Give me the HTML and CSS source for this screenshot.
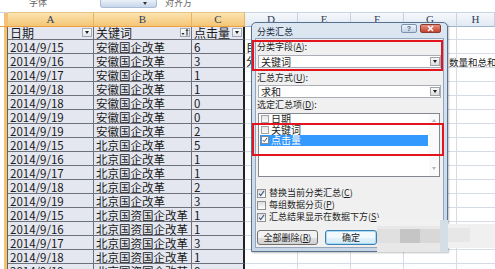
FILE: index.html
```html
<!DOCTYPE html>
<html lang="zh">
<head>
<meta charset="utf-8">
<title>分类汇总</title>
<link rel="stylesheet" href="styles.css">
</head>
<body>
<div class="page">
  <div class="ribbon">
    <span class="rb-t1">字体</span>
    <span class="rb-box"><span class="rb-arrow"></span></span>
    <span class="rb-t2">对齐方</span>
  </div>

  <div class="sheet">
    <div class="colhdr">
      <div class="crh"></div>
      <div class="ch sel">A</div><div class="ch sel">B</div><div class="ch sel">C</div>
      <div class="ch">D</div><div class="ch">E</div><div class="ch">F</div><div class="ch">G</div><div class="ch">H</div>
    </div>

    <div class="row first">
      <div class="rh"></div>
      <div class="c">日期<span class="fb"></span></div>
      <div class="c">关键词<span class="fb sort"><svg width="8" height="7" viewBox="0 0 8 7"><path d="M0.5 4h3l-1.5 2z" fill="#222"/><path d="M6 0.5v6M4.8 2l1.2-1.5 1.2 1.5" stroke="#222" stroke-width="1" fill="none"/></svg></span></div>
      <div class="c n">点击量<span class="fb"></span></div>
      <div class="blank"></div>
    </div>

    <div class="row"><div class="rh"></div><div class="c">2014/9/15</div><div class="c">安徽国企改革</div><div class="c n">6</div><div class="blank"><span class="ov">目</span></div></div>
    <div class="row"><div class="rh"></div><div class="c">2014/9/16</div><div class="c">安徽国企改革</div><div class="c n">3</div><div class="blank"><span class="ov">分</span><span class="tail">数量和总和</span></div></div>
    <div class="row"><div class="rh"></div><div class="c">2014/9/17</div><div class="c">安徽国企改革</div><div class="c n">1</div><div class="blank"></div></div>
    <div class="row"><div class="rh"></div><div class="c">2014/9/18</div><div class="c">安徽国企改革</div><div class="c n">1</div><div class="blank"></div></div>
    <div class="row"><div class="rh"></div><div class="c">2014/9/18</div><div class="c">安徽国企改革</div><div class="c n">0</div><div class="blank"></div></div>
    <div class="row"><div class="rh"></div><div class="c">2014/9/19</div><div class="c">安徽国企改革</div><div class="c n">0</div><div class="blank"></div></div>
    <div class="row"><div class="rh"></div><div class="c">2014/9/19</div><div class="c">安徽国企改革</div><div class="c n">2</div><div class="blank"></div></div>
    <div class="row"><div class="rh"></div><div class="c">2014/9/15</div><div class="c">北京国企改革</div><div class="c n">5</div><div class="blank"></div></div>
    <div class="row"><div class="rh"></div><div class="c">2014/9/16</div><div class="c">北京国企改革</div><div class="c n">1</div><div class="blank"></div></div>
    <div class="row"><div class="rh"></div><div class="c">2014/9/17</div><div class="c">北京国企改革</div><div class="c n">1</div><div class="blank"></div></div>
    <div class="row"><div class="rh"></div><div class="c">2014/9/18</div><div class="c">北京国企改革</div><div class="c n">2</div><div class="blank"></div></div>
    <div class="row"><div class="rh"></div><div class="c">2014/9/19</div><div class="c">北京国企改革</div><div class="c n">3</div><div class="blank"></div></div>
    <div class="row"><div class="rh"></div><div class="c">2014/9/15</div><div class="c">北京国资国企改革</div><div class="c n">1</div><div class="blank"></div></div>
    <div class="row"><div class="rh"></div><div class="c">2014/9/16</div><div class="c">北京国资国企改革</div><div class="c n">1</div><div class="blank"></div></div>
    <div class="row"><div class="rh"></div><div class="c">2014/9/17</div><div class="c">北京国资国企改革</div><div class="c n">3</div><div class="blank"></div></div>
    <div class="row"><div class="rh"></div><div class="c">2014/9/18</div><div class="c">北京国资国企改革</div><div class="c n">1</div><div class="blank"></div></div>
    <div class="row"><div class="rh"></div><div class="c">2014/9/19</div><div class="c">北京国资国企改革</div><div class="c n">0</div><div class="blank"></div></div>
  </div>

  <div class="dialog">
    <div class="dlg-title">
      <span class="dlg-caption">分类汇总</span>
      <span class="tb-help">?</span>
      <span class="tb-close"><svg width="9" height="7" viewBox="0 0 9 7"><path d="M2 1l5 5M7 1l-5 5" stroke="#fff" stroke-width="1.6"/></svg></span>
    </div>
    <div class="dlg-body">
      <div class="lbl">分类字段(<u>A</u>):</div>
      <div class="combo"><span>关键词</span><span class="dd"></span></div>
      <div class="lbl l2">汇总方式(<u>U</u>):</div>
      <div class="combo c2"><span>求和</span><span class="dd"></span></div>
      <div class="lbl l3">选定汇总项(<u>D</u>):</div>
      <div class="list">
        <div class="items">
          <div class="item"><span class="cb"></span>日期</div>
          <div class="item"><span class="cb"></span>关键词</div>
          <div class="item on"><span class="cb checked"><svg width="8" height="8" viewBox="0 0 8 8"><path d="M1.2 4.2l1.8 2 3.8-5" stroke="#24324e" stroke-width="1.2" fill="none"/></svg></span>点击量</div>
        </div>
        <div class="sbar"><span class="up"></span><span class="down"></span></div>
      </div>
      <div class="opts">
        <div class="opt"><span class="cb2"><svg width="7" height="7" viewBox="0 0 7 7"><path d="M1 3.6l1.7 1.9 3.3-4.5" stroke="#3d5a8a" stroke-width="1.2" fill="none"/></svg></span>替换当前分类汇总(<u>C</u>)</div>
        <div class="opt"><span class="cb2"></span>每组数据分页(<u>P</u>)</div>
        <div class="opt"><span class="cb2"><svg width="7" height="7" viewBox="0 0 7 7"><path d="M1 3.6l1.7 1.9 3.3-4.5" stroke="#3d5a8a" stroke-width="1.2" fill="none"/></svg></span>汇总结果显示在数据下方(<u>S</u>)</div>
      </div>
      <div class="btns">
        <button class="btn">全部删除(<u>R</u>)</button>
        <button class="btn def">确定</button>
        <button class="btn">取消</button>
      </div>
    </div>
  </div>

  <div class="mark m1"></div>
  <div class="mark m2"></div>

  <div class="wm">
    <span class="wb w1"></span><span class="wb w2"></span><span class="wb w3"></span><span class="wb w4"></span>
    <span class="wb w5"></span><span class="wb w6"></span><span class="wb w7"></span><span class="wb w8"></span>
  </div>
</div>
</body>
</html>
```

FILE: styles.css
```css
* { box-sizing: border-box; margin: 0; padding: 0; }
html, body { width: 495px; height: 269px; overflow: hidden; background: #fff; }
body { font-family: "Noto Sans CJK SC", "Noto Sans", sans-serif; color: #1c1c1c; }
.page { position: relative; width: 495px; height: 269px; overflow: hidden; }

/* ribbon fragment */
.ribbon { height: 12px; display: flex; align-items: flex-start; overflow: hidden; }
.rb-t1 { margin-left: 29px; font-size: 9px; line-height: 9px; margin-top: -2px; color: #666; }
.rb-box { margin-left: 53px; width: 57px; height: 8px; border: 1px solid #a9bdd5; border-top: none; border-radius: 0 0 3px 3px; background: linear-gradient(#e9f0f9, #c8d7ea); position: relative; }
.rb-arrow { position: absolute; left: 42px; top: 2px; border-left: 2.5px solid transparent; border-right: 2.5px solid transparent; border-top: 3px solid #333; }
.rb-t2 { margin-left: 8px; font-size: 9px; line-height: 9px; margin-top: -2px; color: #666; }

/* sheet */
.sheet { height: 257px; overflow: hidden; }
.colhdr { display: grid; grid-template-columns: 8px 86px 98px 53px 53px 53px 53px 53px 1fr; height: 15px; }
.crh { background: linear-gradient(to right, #fff 0 4px, #f3c27a 4px); border-bottom: 1px solid #f0a03c; border-top: 1px solid #c9d6e6; }
.ch { font: 11px/13px "Liberation Serif", serif; text-align: center; color: #2e3f58; background: linear-gradient(#f6f9fc, #e2e9f3); border-right: 1px solid #c5d2e2; border-bottom: 1px solid #9eb6ce; border-top: 1px solid #c9d6e6; }
.ch.sel { background: linear-gradient(#fbe3b0, #f4c676); border-right-color: #e8b462; border-bottom-color: #f0a03c; border-top-color: #e9c489; }

.row { display: grid; grid-template-columns: 8px 86px 98px 53px 1fr; height: 14px; }
.row.first { height: 13px; }
.rh { background: linear-gradient(to right, #fff 0 4px, #f4c36e 4px 7px, #5f636c 7px 8px); }

.c { display: flex; align-items: flex-start; padding: 1px 0 0 2px; font-size: 11.5px; line-height: 13px; background: #e4e7f0; border-right: 1px solid #6d717b; border-bottom: 1px solid #6d717b; white-space: nowrap; overflow: hidden; color: #1a1a1a; }
.row.first .c { padding-top: 0; line-height: 12px; font-size: 12px; }
.c.n { border-right: 2px solid #222; }

.fb { margin-left: auto; margin-right: 1px; margin-top: 1px; width: 10px; height: 9px; border: 1px solid #a3a8b2; background: linear-gradient(#ffffff, #e2e5ea); position: relative; display: flex; align-items: center; justify-content: center; }
.fb::after { content: ""; border-left: 2.5px solid transparent; border-right: 2.5px solid transparent; border-top: 3px solid #222; }
.fb.sort::after { display: none; }

.blank { display: flex; align-items: flex-start; padding: 1px 0 0 1px; font-size: 11.5px; line-height: 13px; border-bottom: 1px solid #d5dce7; background: repeating-linear-gradient(to right, transparent 0 52px, #d5dce7 52px 53px); white-space: nowrap; overflow: hidden; color: #1a1a1a; }
.row.first .blank { padding-top: 0; }
.ov { width: 5px; overflow: hidden; flex: none; }
.tail { margin-left: 198px; font-size: 9.5px; line-height: 13px; padding-top: 1px; }

/* dialog */
.dialog { position: absolute; left: 251px; top: 22px; width: 197px; height: 230px; border: 1px solid #587391; border-radius: 5px 5px 0 0; background: linear-gradient(#dbe6f1, #c8d6e6); padding: 0 3px 3px; display: flex; flex-direction: column; font-size: 9px; box-shadow: 1px 1px 2px rgba(0, 0, 0, .25); color: #1e1e1e; }
.dlg-title { height: 15px; display: flex; align-items: flex-start; }
.dlg-caption { margin-left: 2px; margin-top: 4px; line-height: 10px; font-size: 9px; color: #1b2b3f; }
.tb-help { margin-left: auto; margin-top: 1px; width: 16px; height: 9px; border: 1px solid #7d93ad; border-radius: 2px; background: linear-gradient(#edf3f9, #c3d3e6); font: bold 7px/7px "Liberation Sans", sans-serif; color: #50647d; text-align: center; }
.tb-close { margin-left: 3px; margin-right: 3px; margin-top: 1px; width: 21px; height: 9px; border: 1px solid #8a3b32; border-radius: 2px; background: linear-gradient(#e8907f, #c5412e); display: flex; align-items: center; justify-content: center; }

.dlg-body { flex: 1; background: #f0f0f0; border: 1px solid #93a6bd; display: flex; flex-direction: column; }
.lbl { line-height: 10px; padding-left: 1px; margin-top: 3px; font-size: 9px; }
.lbl.l2 { margin-top: 5px; }
.lbl.l3 { margin-top: 2px; }
.combo { margin: 3px 2px 0 2px; height: 13px; border: 1px solid #a9adb5; background: #fff; display: flex; align-items: center; font-size: 10px; line-height: 11px; padding-left: 2px; }
.combo.c2 { margin-top: 2px; }
.dd { margin-left: auto; width: 10px; height: 9px; border: 1px solid #a0a4ab; background: linear-gradient(#f7f7f7, #dcdcdc); display: flex; align-items: center; justify-content: center; margin-right: 0; }
.dd::after { content: ""; border-left: 2.5px solid transparent; border-right: 2.5px solid transparent; border-top: 3px solid #1e1e1e; }

.list { margin: 3px 3px 0 2px; height: 64px; border: 1px solid #828790; background: #fff; display: flex; }
.items { flex: 1; padding-left: 1px; }
.item { height: 10.5px; display: flex; align-items: center; font-size: 10px; line-height: 10px; margin-right: 1px; }
.item.on { background: #3399ff; color: #fff; }
.cb { width: 8px; height: 8px; border: 1px solid #a4a4a4; background: linear-gradient(#e6e6e6, #fbfbfb); margin: 0 2px 0 1px; display: flex; align-items: center; justify-content: center; }
.cb.checked { background: #fff; border-color: #8a8a8a; }
.sbar { width: 10px; display: flex; flex-direction: column; justify-content: space-between; align-items: center; padding: 5px 0 6px; background: #fafafa; }
.up { border-left: 2.5px solid transparent; border-right: 2.5px solid transparent; border-bottom: 3px solid #b5b5b5; }
.down { border-left: 2.5px solid transparent; border-right: 2.5px solid transparent; border-top: 3px solid #b5b5b5; }

.opts { margin-top: 10px; }
.opt { height: 12px; display: flex; align-items: center; font-size: 9px; line-height: 10px; }
.cb2 { width: 9px; height: 9px; border: 1px solid #8e8f8f; background: linear-gradient(#dcdcdc, #fefefe); margin: 0 3px 0 1px; display: flex; align-items: center; justify-content: center; }

.btns { margin-top: 7px; display: flex; gap: 7px; padding-left: 1px; }
.btn { height: 15px; width: 61px; border: 1px solid #707070; border-radius: 3px; background: linear-gradient(#f3f3f3 0 50%, #e0e0e0 50%, #d2d2d2); font: 9px/13px "Noto Sans CJK SC", sans-serif; color: #1e1e1e; }
.btn.def, .btn + .btn { width: 52px; }
.btn.def { border-color: #3c7fb1; background: linear-gradient(#f2f9fd 0 50%, #e2f2fb 50%, #d2ebf8); box-shadow: inset 0 0 0 1px #a8dcf4; }

/* red annotation boxes */
.mark { position: absolute; border: 2px solid #e2141d; }
.m1 { left: 252px; top: 40px; width: 191px; height: 31px; }
.m2 { left: 252px; top: 123px; width: 192px; height: 33px; }

/* blurred watermark */
.wm { position: absolute; left: 377px; top: 218px; width: 118px; height: 36px; }
.wb { position: absolute; display: block; }
.w1 { left: 0; top: 0; width: 63px; height: 9px; background: #f1f1f1; }
.w2 { left: 0; top: 8px; width: 63px; height: 26px; background: #e8e8e8; }
.w3 { left: 0; top: 11px; width: 23px; height: 14px; background: #e0e0e0; }
.w4 { left: 23px; top: 11px; width: 20px; height: 14px; background: #c5c5c5; }
.w5 { left: 43px; top: 11px; width: 20px; height: 14px; background: #d8d8d8; }
.w6 { left: 63px; top: 2px; width: 8px; height: 32px; background: #d3dee7; }
.w7 { left: 71px; top: 6px; width: 47px; height: 24px; background: #f0f0f0; }
.w8 { left: 71px; top: 10px; width: 22px; height: 14px; background: #e7e7e7; }
```
